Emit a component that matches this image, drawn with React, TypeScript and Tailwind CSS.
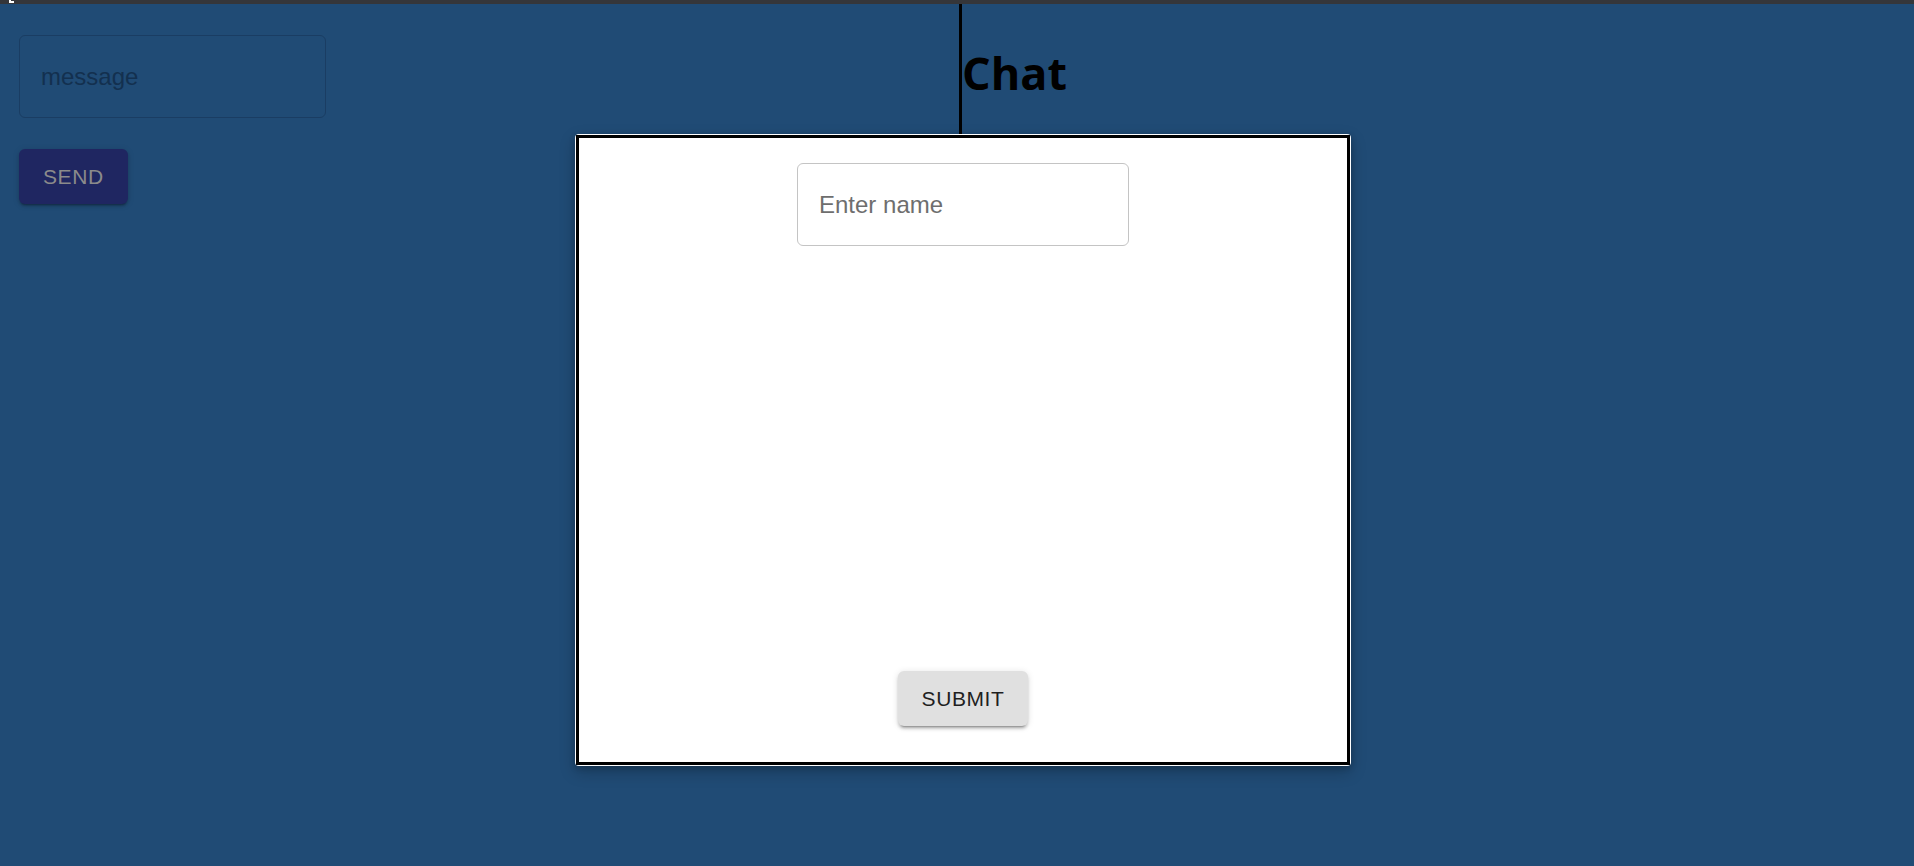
import { useState } from "react";

export default function App() {
  const [message, setMessage] = useState("");
  const [name, setName] = useState("");

  return (
    <div className="relative min-h-screen bg-[#204b75] font-['Liberation_Sans',Arial,sans-serif] overflow-hidden">
      <div className="relative h-[4px] bg-[#35363a]">
        <span className="absolute left-[9px] top-0 h-[3px] w-[5px] border-b-2 border-l-2 border-white" />
      </div>

      <div className="flex">
        {/* left side: message box */}
        <div className="w-[959px] flex flex-col items-start pl-[19px] pt-[31px]">
          <input
            value={message}
            onChange={(e) => setMessage(e.target.value)}
            placeholder="message"
            className="w-[307px] h-[83px] rounded-[6px] border border-[#1a3d63] bg-transparent px-[21px] text-[24px] text-[#13304f] placeholder:text-[#13304f] outline-none"
          />
          <button className="mt-[31px] h-[55px] px-[24px] rounded-[6px] bg-[#1f2661] text-[21px] tracking-[0.6px] text-[#8b8b8b] shadow-[0_3px_2px_-2px_rgba(0,0,0,0.25),0_2px_3px_0_rgba(0,0,0,0.16),0_1px_7px_0_rgba(0,0,0,0.12)]">
            SEND
          </button>
        </div>

        {/* right side: chat */}
        <div className="h-[420px] border-l-[3px] border-black pt-[45px]">
          <h1 className="font-['Open_Sans',sans-serif] font-bold text-[45px] leading-[48px] text-black">
            Chat
          </h1>
        </div>
      </div>

      {/* name modal */}
      <div className="absolute left-[575px] top-[134px] w-[776px] h-[632px] rounded-[4px] bg-white p-[1px] shadow-[0_6px_16px_rgba(0,0,0,0.22),0_2px_6px_rgba(0,0,0,0.18)]">
        <div className="h-full border-[3px] border-black flex flex-col items-center justify-between pt-[25px] pb-[36px]">
          <input
            value={name}
            onChange={(e) => setName(e.target.value)}
            placeholder="Enter name"
            className="w-[332px] h-[83px] rounded-[6px] border border-[#c4c4c4] px-[21px] text-[24px] text-[#212121] placeholder:text-[#6e6e6e] outline-none"
          />
          <button className="h-[55px] px-[24px] rounded-[6px] bg-[#e0e0e0] text-[21px] tracking-[0.6px] text-[#1f1f1f] shadow-[0_4px_2px_-3px_rgba(0,0,0,0.3),0_3px_3px_0_rgba(0,0,0,0.16),0_1px_7px_0_rgba(0,0,0,0.12)]">
            SUBMIT
          </button>
        </div>
      </div>
    </div>
  );
}
